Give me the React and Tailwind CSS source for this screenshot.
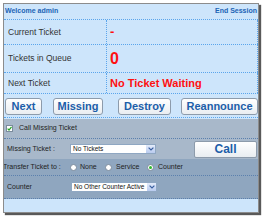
import React from 'react';

const Btn = ({ label, className = '' }) => (
  <button
    className={`h-[17px] rounded-[3px] border border-[#8d9bab] bg-gradient-to-b from-white to-[#e9edf1] text-[11px] font-bold leading-none text-[#1c5ea9] ${className}`}
  >
    {label}
  </button>
);

const Select = ({ text, className = '' }) => (
  <div
    className={`flex h-[10px] items-center overflow-hidden border border-[#8fa7c2] bg-white ${className}`}
  >
    <span className="flex-1 overflow-hidden whitespace-nowrap pl-[2px] text-[6.5px] leading-none text-[#111]">
      {text}
    </span>
    <span className="flex h-full w-[9px] flex-shrink-0 items-center justify-center bg-gradient-to-b from-[#e3ebfa] to-[#b9cbef]">
      <svg width="6" height="4" viewBox="0 0 6 4">
        <path d="M0.6 0.6 L3 3 L5.4 0.6" fill="none" stroke="#3a5fa0" strokeWidth="1.2" />
      </svg>
    </span>
  </div>
);

const Radio = ({ checked }) => (
  <span className="flex h-[7px] w-[7px] flex-shrink-0 items-center justify-center rounded-full border border-[#7b8b9c] bg-white">
    {checked && <span className="h-[3px] w-[3px] rounded-full bg-[#2eb82e]" />}
  </span>
);

const TicketRow = ({ label, value, valueClass, height }) => (
  <div className={`flex border-b border-dotted border-[#5aa5ec] ${height}`}>
    <div className="flex w-[103px] items-center border-r border-dotted border-[#5aa5ec] pl-[4px] text-[8.5px] text-[#333]">
      {label}
    </div>
    <div
      className={`flex flex-1 items-center border-r border-dotted border-[#5aa5ec] pl-[3px] font-bold text-[#ff1010] ${valueClass}`}
    >
      {value}
    </div>
  </div>
);

export default function App() {
  return (
    <div className="h-[218px] w-[264px] bg-white pl-[3px] pt-[3px] font-['Liberation_Sans',Arial,sans-serif]">
      <div className="flex h-[210px] w-[256px] flex-col overflow-hidden border border-[#8c8c8c] bg-[#cde5fb] shadow-[2px_2px_1px_rgba(0,0,0,0.65)]">
        <div className="flex h-[16px] flex-shrink-0 items-center justify-between border-b border-dotted border-[#5aa5ec] px-[1px] text-[7px] font-bold text-[#1b63b5]">
          <span>Welcome admin</span>
          <span>End Session</span>
        </div>

        <TicketRow label="Current Ticket" value="-" valueClass="text-[13px]" height="h-[25px]" />
        <TicketRow label="Tickets in Queue" value="0" valueClass="text-[16px]" height="h-[28px]" />
        <TicketRow
          label="Next Ticket"
          value="No Ticket Waiting"
          valueClass="text-[11px]"
          height="h-[21px]"
        />

        <div className="flex h-[24px] flex-shrink-0 items-start border-b border-dotted border-[#5aa5ec] pt-[4px]">
          <Btn label="Next" className="ml-[1px] w-[37px]" />
          <Btn label="Missing" className="ml-[11px] w-[50px]" />
          <Btn label="Destroy" className="ml-[15px] w-[53px]" />
          <Btn label="Reannounce" className="ml-[10px] w-[77px]" />
        </div>
        <div className="h-[1px] flex-shrink-0" />

        <div className="flex flex-shrink-0 flex-col bg-[#a8b8ca] text-[7px] text-[#222]">
          <div className="flex h-[20px] items-center border-b border-dotted border-[#5b80ae] pl-[2px]">
            <span className="flex h-[7px] w-[7px] items-center justify-center border border-[#7b8b9c] bg-white">
              <svg width="5" height="5" viewBox="0 0 5 5">
                <path d="M0.6 2.6 L2 4 L4.5 0.8" fill="none" stroke="#22a322" strokeWidth="1.2" />
              </svg>
            </span>
            <span className="ml-[6px]">Call Missing Ticket</span>
          </div>

          <div className="flex h-[20px] items-center pl-[3px]">
            <span className="w-[63px]">Missing Ticket :</span>
            <Select text="No Tickets" className="w-[86px]" />
            <button className="ml-[38px] h-[17px] w-[63px] rounded-[2px] border border-[#8d9bab] bg-gradient-to-b from-white to-[#e9edf1] text-[12px] font-bold leading-none text-[#1c5ea9]">
              Call
            </button>
          </div>

          <div className="flex h-[17px] items-center border-b border-dotted border-[#5b80ae] bg-[#8fa6bf]">
            <span className="-ml-[1px] w-[67px] whitespace-nowrap">Transfer Ticket to :</span>
            <Radio />
            <span className="ml-[3px] w-[25px]">None</span>
            <Radio />
            <span className="ml-[4px] w-[31px]">Service</span>
            <Radio checked />
            <span className="ml-[4px]">Counter</span>
          </div>

          <div className="flex h-[23px] items-center border-b border-dotted border-[#5b80ae] bg-[#8fa6bf] pl-[3px]">
            <span className="w-[64px]">Counter</span>
            <Select text="No Other Counter Active" className="w-[86px]" />
          </div>
        </div>

        <div className="flex-1" />
      </div>
    </div>
  );
}
